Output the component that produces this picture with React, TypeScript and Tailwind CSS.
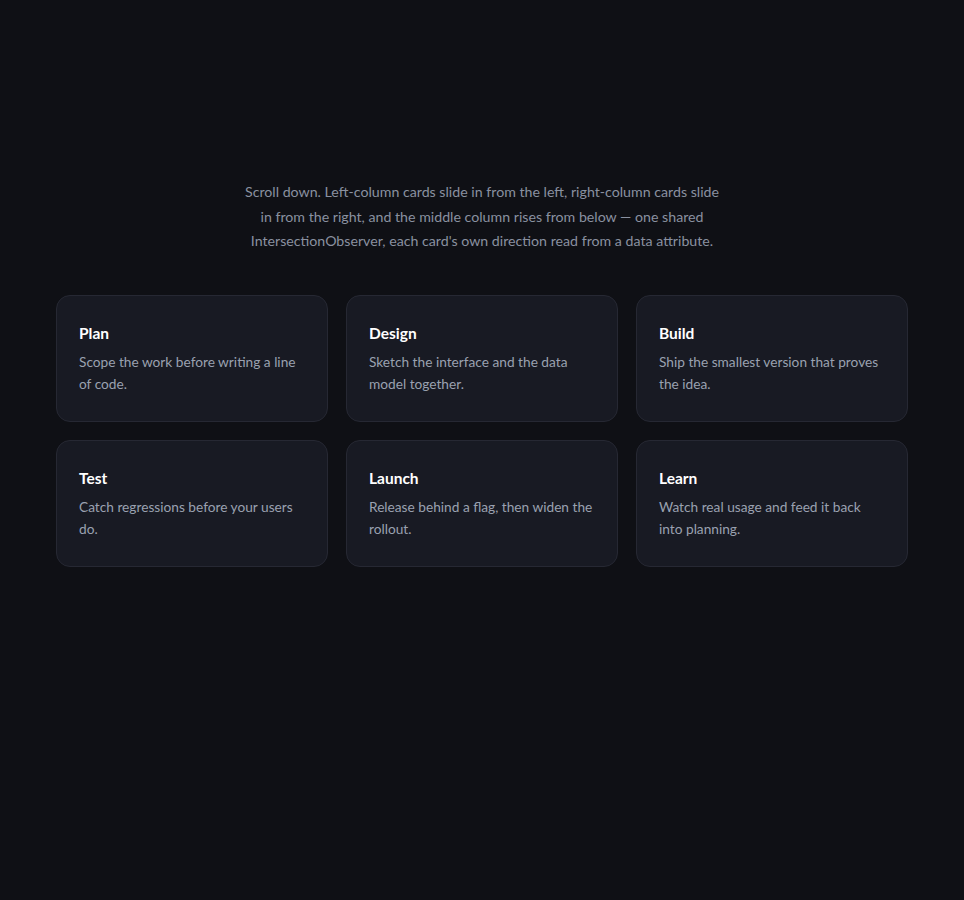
import React from "react";

const cards = [
  { t: "Plan", d: "Scope the work before writing a line of code." },
  { t: "Design", d: "Sketch the interface and the data model together." },
  { t: "Build", d: "Ship the smallest version that proves the idea." },
  { t: "Test", d: "Catch regressions before your users do." },
  { t: "Launch", d: "Release behind a flag, then widen the rollout." },
  { t: "Learn", d: "Watch real usage and feed it back into planning." },
];

export default function App() {
  return (
    <div className="min-h-[900px] bg-[#0f1015] px-[56px] pt-[180px] font-['Lato',sans-serif]">
      <p className="mx-auto max-w-[484px] text-center text-[14.2px] leading-[24.5px] text-[#8a91a0]">
        Scroll down. Left-column cards slide in from the left, right-column cards slide in from the right, and the middle column rises from below — one shared IntersectionObserver, each card's own direction read from a data attribute.
      </p>
      <div className="mt-[41.5px] grid grid-cols-3 gap-x-[18px] gap-y-[18.5px]">
        {cards.map((c) => (
          <div key={c.t} className="h-[126.5px] rounded-[14px] border border-[#262833] bg-[#181a23] px-[22px] pt-[27px]">
            <h3 className="text-[15.5px] font-bold leading-[20px] text-white">{c.t}</h3>
            <p className="mt-[8px] text-[13.7px] leading-[22px] text-[#9aa1b0]">{c.d}</p>
          </div>
        ))}
      </div>
    </div>
  );
}
